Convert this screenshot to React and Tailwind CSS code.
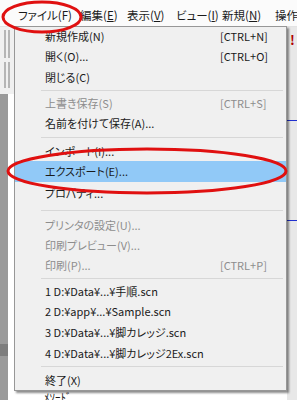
import React from "react";

const font = { fontFamily: '"Noto Sans CJK JP", "Noto Sans", sans-serif' };

const menuBar = [
  { label: "ファイル(F)", w: "w-[62px]" },
  { label: "編集(", u: "E", after: ")", w: "w-[47px]" },
  { label: "表示(", u: "V", after: ")", w: "w-[49px]" },
  { label: "ビュー(", u: "I", after: ")", w: "w-[46px]" },
  { label: "新規(", u: "N", after: ")", w: "w-[53px]" },
  { label: "操作", w: "w-[30px]" },
];

// menu rows with their own heights; sep = divider block
const items = [
  { text: "新規作成(N)", key: "[CTRL+N]", h: "h-[19px]" },
  { text: "開く(O)...", key: "[CTRL+O]", h: "h-[21px]" },
  { text: "閉じる(C)", h: "h-[21px]" },
  { sep: "h-[5px]" },
  { text: "上書き保存(S)", key: "[CTRL+S]", off: true, h: "h-[20px]" },
  { text: "名前を付けて保存(A)...", h: "h-[21px]" },
  { sep: "h-[7px]" },
  { text: "インポート(I)...", h: "h-[20px]" },
  { text: "エクスポート(E)...", hot: true, h: "h-[21px]" },
  { text: "プロパティ...", h: "h-[23px]" },
  { sep: "h-[10px]" },
  { text: "プリンタの設定(U)...", off: true, h: "h-[20px]" },
  { text: "印刷プレビュー(V)...", off: true, h: "h-[20px]" },
  { text: "印刷(P)...", key: "[CTRL+P]", off: true, h: "h-[21px]" },
  { sep: "h-[5px]" },
  { text: "1 D:¥Data¥...¥手順.scn", h: "h-[20px]" },
  { text: "2 D:¥app¥...¥Sample.scn", h: "h-[21px]" },
  { text: "3 D:¥Data¥...¥脚カレッジ.scn", h: "h-[21px]" },
  { text: "4 D:¥Data¥...¥脚カレッジ2Ex.scn", h: "h-[20px]" },
  { sep: "h-[7px]" },
  { text: "終了(X)", h: "h-[20px]" },
];

export default function App() {
  return (
    <div
      className="relative w-[297px] h-[400px] overflow-hidden bg-white text-[11px] text-[#1a1a1a] [font-feature-settings:'palt']"
      style={font}
    >
      {/* menu bar */}
      <div className="flex items-center h-[27px] pt-[5px] pl-[18px] bg-[#fbfbfb] border-b border-[#e3e3e3] text-[11.5px]">
        {menuBar.map((m, i) => (
          <div key={i} className={`${m.w} shrink-0 whitespace-nowrap`}>
            {m.label}
            {m.u && <span className="underline">{m.u}</span>}
            {m.after}
          </div>
        ))}
      </div>

      {/* window behind the menu */}
      <div className="flex h-[373px]">
        <div className="w-[14px] flex flex-col bg-[#f0f0f0]">
          <div className="h-[28px] mt-[3px] flex gap-[2px] pl-[4px]">
            <div className="w-[2px] h-full bg-[#b5b5b5]" />
            <div className="w-[2px] h-full bg-[#b5b5b5]" />
          </div>
          <div className="h-[26px] mt-[4px] flex gap-[2px] pl-[4px]">
            <div className="w-[2px] h-full bg-[#b5b5b5]" />
            <div className="w-[2px] h-full bg-[#b5b5b5]" />
          </div>
          <div className="flex flex-1 mt-[6px]">
            <div className="w-[8px] bg-[#9a9a9a] flex flex-col">
              <div className="h-[250px]" />
              <div className="h-[12px] bg-[#7d7d7d]" />
            </div>
            <div className="w-[6px] bg-white" />
          </div>
        </div>
        <div className="flex-1 bg-white" />
        <div className="w-[10px] bg-[#e8e8e8] flex flex-col">
          <div className="h-[6px]" />
          <div className="text-[#b00000] font-bold text-[13px] leading-[14px] pl-[3px]">!</div>
          <div className="h-[74px] border-b border-[#2030d0]" />
          <div className="h-[100px] border-b border-[#2030d0]" />
        </div>
      </div>

      <div className="absolute left-[44px] top-[390px] leading-[14px]">ﾒｿｰﾄﾞ</div>

      {/* dropdown */}
      <div className="absolute left-[14px] top-[26px] w-[273px] bg-[#f0f0f0] border border-[#979797] shadow-[2px_2px_2px_rgba(0,0,0,0.45)]">
        {items.map((it, i) =>
          it.sep ? (
            <div key={i} className={`${it.sep} flex items-center pl-[26px] pr-[3px]`}>
              <div className="w-full h-[1px] bg-[#d7d7d7]" />
            </div>
          ) : (
            <div
              key={i}
              className={`${it.h} flex items-center pl-[30px] pr-[18px] whitespace-nowrap ${
                it.hot ? "bg-[#91c9f7]" : ""
              } ${it.off ? "text-[#8d8d8d]" : ""}`}
            >
              <span className="flex-1">{it.text}</span>
              {it.key && <span className="w-[48px]">{it.key}</span>}
            </div>
          )
        )}
      </div>

      {/* red annotation ellipses */}
      <svg className="absolute left-0 top-0 pointer-events-none" width="297" height="400">
        <ellipse cx="42" cy="17" rx="39" ry="15" fill="none" stroke="#e01010" strokeWidth="3" />
        <ellipse cx="147" cy="171" rx="139" ry="22" fill="none" stroke="#e01010" strokeWidth="3" />
      </svg>
    </div>
  );
}
